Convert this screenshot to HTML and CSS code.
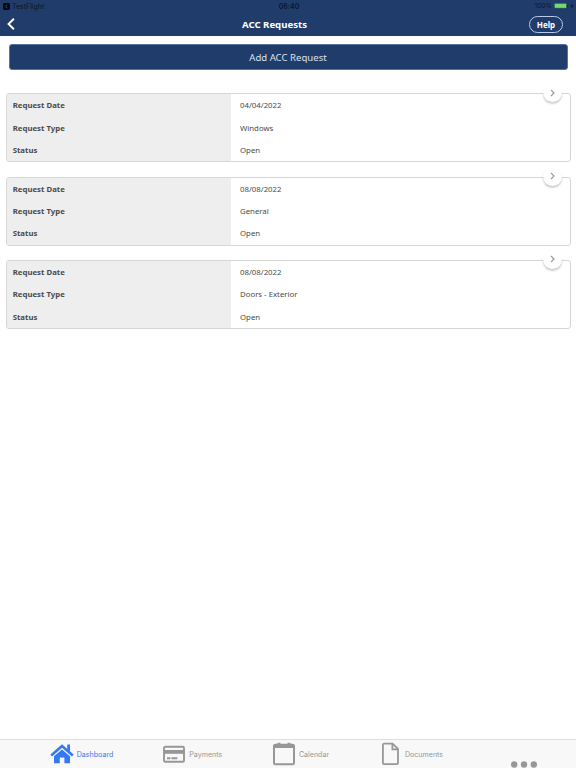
FILE: index.html
```html
<!DOCTYPE html>
<html lang="en">
<head>
  <meta charset="UTF-8">
  <meta name="viewport" content="width=device-width, initial-scale=1.0">
  <title>ACC Requests</title>
  <link rel="stylesheet" href="styles.css">
</head>
<body>
  <header class="header">
    <div class="status-bar">
      <div class="status-left">
        <svg class="back-app" viewBox="0 0 7 7"><rect width="7" height="7" rx="1.4" fill="#050b16"/><path d="M4.2 1.8L2.6 3.5l1.6 1.7" fill="none" stroke="#3b5680" stroke-width=".8"/></svg>
        <span>TestFlight</span>
      </div>
      <span class="time">06:40</span>
      <div class="status-right">
        <span>100%</span>
        <svg class="battery" viewBox="0 0 15 6"><rect x=".3" y=".3" width="12.4" height="5" rx="1" fill="#73d975" stroke="#1b3a48" stroke-width=".6"/><path d="M13.4 2v1.8" stroke="#14263f" stroke-width=".8"/></svg>
        <svg class="bolt" viewBox="0 0 4 6"><path d="M2.6 0L.3 3.4h1.4L1.3 6l2.4-3.5H2.2z" fill="#0d1b33"/></svg>
      </div>
    </div>
    <div class="nav">
      <a class="back" href="#">
        <svg viewBox="0 0 8 12"><path d="M6.9 .7L1.5 6l5.4 5.3" fill="none" stroke="#fff" stroke-width="1.9"/></svg>
      </a>
      <h1>ACC Requests</h1>
      <button type="button" class="help">Help</button>
    </div>
  </header>

  <main class="content">
    <button type="button" class="add-request">Add ACC Request</button>

    <div class="requests">
      <div class="request">
        <div class="labels"><span>Request Date</span><span>Request Type</span><span>Status</span></div>
        <div class="values"><span>04/04/2022</span><span>Windows</span><span>Open</span></div>
        <a class="open" href="#"><svg viewBox="0 0 5 8"><path d="M1 1l3 3-3 3"/></svg></a>
      </div>
      <div class="request">
        <div class="labels"><span>Request Date</span><span>Request Type</span><span>Status</span></div>
        <div class="values"><span>08/08/2022</span><span>General</span><span>Open</span></div>
        <a class="open" href="#"><svg viewBox="0 0 5 8"><path d="M1 1l3 3-3 3"/></svg></a>
      </div>
      <div class="request">
        <div class="labels"><span>Request Date</span><span>Request Type</span><span>Status</span></div>
        <div class="values"><span>08/08/2022</span><span>Doors - Exterior</span><span>Open</span></div>
        <a class="open" href="#"><svg viewBox="0 0 5 8"><path d="M1 1l3 3-3 3"/></svg></a>
      </div>
    </div>
  </main>

  <nav class="tabs">
    <a class="tab active" href="#">
      <svg width="24" height="24" viewBox="0 0 24 24"><path d="M1.2 13.4L12 4l10.8 9.4" fill="none" stroke="currentColor" stroke-width="2.6"/><path d="M17.2 2.6H20v7.6l-2.8-2.6zM12 7.4l8 6.9v7h-5.6v-5.8H9.8v5.8H4v-7z" fill="currentColor"/></svg>
      <span>Dashboard</span>
    </a>
    <a class="tab payments" href="#">
      <svg width="22" height="24" viewBox="0 0 22 24"><rect x="1" y="4.8" width="20" height="15" rx="1.3" fill="none" stroke="currentColor" stroke-width="1.9"/><path d="M1 8h20v3.8H1z" fill="currentColor"/><path d="M4 16.2h3.4M8.4 16.2h6" stroke="currentColor" stroke-width="2"/></svg>
      <span>Payments</span>
    </a>
    <a class="tab calendar" href="#">
      <svg width="22" height="24" viewBox="0 0 22 24"><rect x="1" y="2.8" width="20" height="19.4" rx="1.3" fill="none" stroke="currentColor" stroke-width="2"/><path d="M1 2.2h20v3.8H1zM4.5 .7h3v2h-3zM14.5 .7h3v2h-3z" fill="currentColor"/></svg>
      <span>Calendar</span>
    </a>
    <a class="tab documents" href="#">
      <svg width="17" height="24" viewBox="0 0 17 24"><path d="M2 1.7h8.6l5.4 5.2V21a1.1 1.1 0 0 1-1.1 1.1H2A1.1 1.1 0 0 1 .9 21V2.8A1.1 1.1 0 0 1 2 1.7zM10.4 2v5.4H16" fill="none" stroke="currentColor" stroke-width="1.8"/></svg>
      <span>Documents</span>
    </a>
    <a class="tab more" href="#">
      <svg width="26" height="7" viewBox="0 0 26 7"><g fill="currentColor"><circle cx="3.2" cy="3.5" r="3.2"/><circle cx="13" cy="3.5" r="3.2"/><circle cx="22.8" cy="3.5" r="3.2"/></g></svg>
    </a>
  </nav>
</body>
</html>
```
FILE: styles.css
```css
* {
  margin: 0;
  padding: 0;
  box-sizing: border-box;
}
body {
  font-family: "Noto Sans", "Open Sans", sans-serif;
  background-color: #fff;
  color: #4a4a4a;
  height: 100vh;
  display: flex;
  flex-direction: column;
  overflow: hidden;
}
a {
  color: inherit;
  text-decoration: none;
}
svg {
  display: block;
  flex: none;
}
.header {
  height: 36px;
  background-color: #203c6b;
}
.status-bar {
  height: 12px;
  padding: 0 3px;
  display: grid;
  grid-template-columns: 1fr auto 1fr;
  align-items: center;
  font-family: Inter, sans-serif;
  font-size: 7px;
  color: #0b1629;
}
.status-left, .status-right {
  display: flex;
  align-items: center;
  gap: 2px;
}
.status-right {
  justify-content: flex-end;
  gap: 1.5px;
  font-size: 6.6px;
  margin-right: -1px;
}
.back-app {
  width: 7px;
  height: 7px;
}
.time {
  font-weight: 600;
  padding-left: 2px;
}
.battery {
  width: 15px;
  height: 6px;
}
.bolt {
  width: 4px;
  height: 6px;
}
.nav {
  height: 24px;
  padding: 0 13px 0 7px;
  display: grid;
  grid-template-columns: 34px 1fr 34px;
  align-items: center;
}
.back svg {
  width: 8px;
  height: 12px;
}
h1 {
  font-size: 9.6px;
  font-weight: 700;
  color: #fff;
  text-align: center;
  padding-right: 21px;
}
.help {
  height: 17px;
  border: 1px solid #b9cbe6;
  border-radius: 9px;
  background: none;
  color: #fff;
  font: 700 8px "Noto Sans", sans-serif;
}
.content {
  flex: 1;
  padding: 8px 5px 0 6px;
}
.add-request {
  display: block;
  width: 559px;
  height: 26px;
  margin-left: 2.5px;
  border: 1px solid #5872a0;
  border-radius: 3px;
  background-color: #203c6b;
  color: #d7e1f2;
  font: 400 9.6px "Noto Sans", sans-serif;
}
.requests {
  margin-top: 23.4px;
  display: flex;
  flex-direction: column;
  gap: 14.2px;
}
.request {
  position: relative;
  height: 69px;
  display: flex;
  border: 1px solid #d6d6d6;
  border-radius: 3px;
}
.labels, .values {
  display: flex;
  flex-direction: column;
  font-size: 7.8px;
}
.labels span, .values span {
  height: 22.4px;
  line-height: 22.4px;
}
.labels {
  width: 224px;
  padding-left: 5.7px;
  background-color: #eee;
  border-radius: 2px 0 0 2px;
  font-weight: 700;
}
.values {
  padding-left: 9px;
}
/* round arrow over the card's top edge */
.open {
  position: absolute;
  top: -11px;
  right: 8.5px;
  width: 19px;
  height: 19px;
  display: flex;
  align-items: center;
  justify-content: center;
  border-radius: 50%;
  background-color: #fff;
  box-shadow: 0 2px 2px rgba(0,0,0,0.2);
}
.open svg {
  width: 5px;
  height: 8px;
  fill: none;
  stroke: #999;
  stroke-width: 1.2;
}
.tabs {
  height: 29px;
  padding-left: 26.5px;
  display: flex;
  border-top: 1px solid #dedede;
  background-color: #f8f8f8;
  color: #979797;
  font-family: Inter, sans-serif;
  font-size: 7.1px;
}
.tab {
  flex: 0 0 110.5px;
  display: flex;
  align-items: center;
  justify-content: center;
  gap: 4px;
}
.tab.active {
  color: #3478f6;
  gap: 2.5px;
}
.tab.payments {
  padding-left: 1px;
}
.tab.calendar {
  padding-right: 3.5px;
}
.tab.documents {
  padding-right: 1.5px;
  gap: 6px;
}
.tab.more {
  align-items: flex-end;
}
```
